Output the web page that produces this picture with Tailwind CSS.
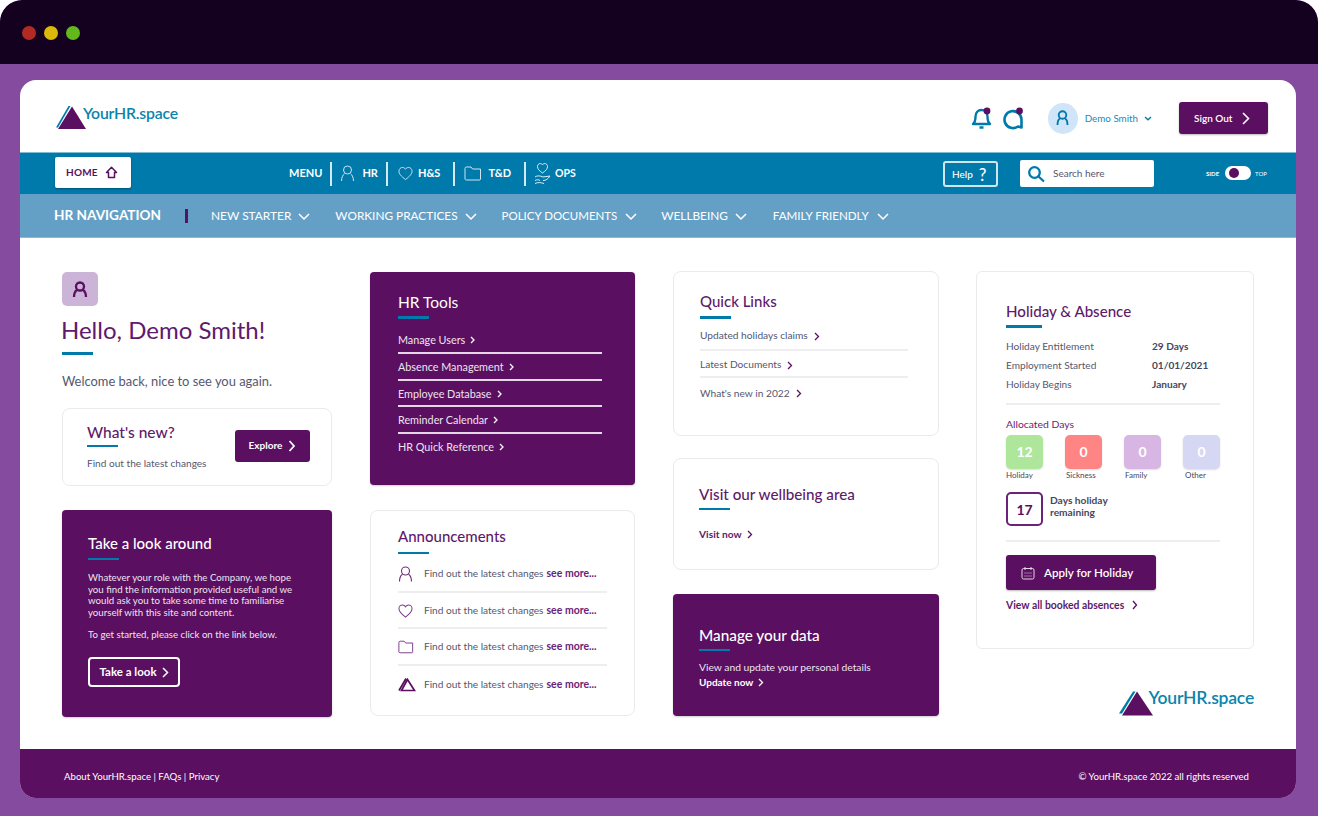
<!doctype html>
<html><head><meta charset="utf-8"><script src="https://cdn.jsdelivr.net/npm/@tailwindcss/browser@4"></script></head>
<body class="m-0 bg-white">
<div class="w-[1318px] h-[816px] overflow-hidden flex flex-col bg-[#854b9f] rounded-t-[22px] font-['Lato','Noto_Sans',sans-serif] text-[#555770]">
  <div class="h-[64px] shrink-0 bg-[#14011f] rounded-t-[22px] flex items-center gap-[8px] pl-[22px] pt-[2px]">
    <span class="w-[14px] h-[14px] rounded-full bg-[#b22a24]"></span><span class="w-[14px] h-[14px] rounded-full bg-[#dcb70c]"></span><span class="w-[14px] h-[14px] rounded-full bg-[#62b81c]"></span>
  </div>
  <div class="mt-[16px] ml-[20px] w-[1276px] h-[718px] bg-white rounded-[16px] overflow-hidden flex flex-col">
    <!-- header -->
    <header class="h-[72px] shrink-0 flex items-center pl-[36px] pr-[28px] pt-[4px]">
      <div class="flex items-start relative h-[26px] w-[124px] -mt-[3px]">
        <svg width="31" height="24" viewBox="0 0 31 24" class="mt-[2px] shrink-0"><path d="M0 21.500 L12.500 0 L14.500 0 L2 21.500Z" fill="#0079ab"/><path d="M2 23 L16 0.500 L30 23Z" fill="#5a0f60"/></svg>
        <span class="ml-[-4px] -mt-[1px] text-[15.800px] leading-[20px] font-semibold text-[#0a84ad] tracking-[-0.2px]">YourHR.space</span>
      </div>
      <div class="ml-auto flex items-center">
        <svg width="22" height="24" viewBox="0 0 22 24" fill="none" stroke="#0079ab" stroke-width="2.400"><path d="M2 18c2.500-2 2.500-4 2.500-7.500 0-4 2.500-6.500 6-6.500s6 2.500 6 6.500c0 3.500 0 5.500 2.500 7.500Z" stroke-linejoin="round"/><path d="M8.500 21.500h4" stroke-width="2.600"/><circle cx="16" cy="5" r="3.400" fill="#5a0f60" stroke="none"/></svg>
        <svg class="ml-[10px]" width="22" height="24" viewBox="0 0 22 24" fill="none" stroke="#0079ab" stroke-width="2.600"><path d="M15 20.500 A8.500 8.500 0 1 1 18.500 13.500 L18.500 21.500 Z" stroke-linejoin="round"/><circle cx="16.500" cy="5" r="3.400" fill="#5a0f60" stroke="none"/></svg>
        <span class="ml-[23px] w-[30px] h-[31px] rounded-full bg-[#d0e6f8] flex items-center justify-center">
          <svg width="13" height="16" viewBox="0 0 13 16" fill="none" stroke="#0079ab" stroke-width="1.900"><circle cx="6.500" cy="5" r="3.800"/><path d="M1.500 15c0-4 1.500-6 2.500-6.500M11.500 15c0-4-1.500-6-2.500-6.500"/></svg>
        </span>
        <span class="ml-[7px] text-[9.800px] text-[#1b8bb5]">Demo Smith</span>
        <svg class="ml-[6px]" width="8" height="5" viewBox="0 0 8 5" fill="none" stroke="#0079ab" stroke-width="1.300"><path d="M1 1l3 2.800L7 1"/></svg>
        <button class="ml-[27px] w-[89px] h-[32px] rounded-[3px] bg-[#5a0f60] shadow-[0_1px_2px_#0004] text-white text-[10px] font-semibold flex items-center pl-[15px]">Sign Out
          <svg class="ml-[10px]" width="8" height="13" viewBox="0 0 8 13" fill="none" stroke="#fff" stroke-width="1.600"><path d="M1 1l5.500 5.500L1 12"/></svg>
        </button>
      </div>
    </header>
    <!-- blue nav -->
    <nav class="h-[42px] shrink-0 bg-[#0079ab] border-t border-[#7fbcd5] flex items-center pl-[35px] text-white relative">
      <div class="w-[76px] h-[31px] bg-white rounded-[2px] shadow-[0_1px_2px_#0005] flex items-center pl-[11px] pt-[1px] text-[#5a0f60] text-[10px] font-bold tracking-[0.2px] mb-[3px]">HOME
        <svg class="ml-[7px]" width="13" height="13" viewBox="0 0 13 13" fill="none" stroke="#5a0f60" stroke-width="1.500"><path d="M6.500 1.200L1.500 6.500H3.500V11.500H9.500V6.500H11.500Z" stroke-linejoin="round"/></svg>
      </div>
      <div class="ml-[158px] flex items-center text-[11px] font-bold h-[24px]">
        <span>MENU</span><span class="ml-[8px] w-[2px] h-[24px] bg-[#d4e9f2]"></span>
        <svg class="ml-[8px]" width="15" height="17" viewBox="0 0 15 17" fill="none" stroke="#cfe6f0" stroke-width="1"><circle cx="7.500" cy="5" r="4"/><path d="M1.500 16c0-4 1.800-6.500 3-7.300M13.500 16c0-4-1.800-6.500-3-7.300"/></svg>
        <span class="ml-[7px]">HR</span><span class="ml-[8px] w-[2px] h-[24px] bg-[#d4e9f2]"></span>
        <svg class="ml-[10px]" width="15" height="15" viewBox="0 0 16 15" fill="none" stroke="#cfe6f0" stroke-width="1"><path d="M8 14C3.500 10.500 1 8 1 5 1 2.500 3 1 4.700 1 6 1 7.300 1.700 8 3 8.700 1.700 10 1 11.300 1 13 1 15 2.500 15 5 15 8 12.500 10.500 8 14Z"/></svg>
        <span class="ml-[5px]">H&amp;S</span><span class="ml-[13px] w-[2px] h-[24px] bg-[#d4e9f2]"></span>
        <svg class="ml-[9px]" width="18" height="15" viewBox="0 0 18 15" fill="none" stroke="#cfe6f0" stroke-width="1"><path d="M1 2.500C1 1.500 1.500 1 2.500 1H7l1.500 2h8v10c0 .700-.500 1-1 1h-13c-1 0-1.500-.500-1.500-1Z"/></svg>
        <span class="ml-[6px]">T&amp;D</span><span class="ml-[13px] w-[2px] h-[24px] bg-[#d4e9f2]"></span>
        <svg class="ml-[8px]" width="17" height="23" viewBox="0 0 17 23" fill="none" stroke="#dcedf5" stroke-width="1"><path d="M8.500 11C5 8.500 3.500 7 3.500 4.500 3.500 2.500 5 1.500 6.300 1.500c1 0 1.800.500 2.200 1.300.4-.8 1.200-1.300 2.200-1.300 1.300 0 2.800 1 2.800 3 0 2.500-1.500 4-5 6.500Z"/><path d="M1 15c2-1.500 5-1.500 8 0l7-1c-2 3-4 4.500-7 4.500M1 18.500c2-1 3.500-1 5 0M1 21.500c3-1.500 6-1 9 0"/></svg>
        <span class="ml-[4px] text-[10.500px]">OPS</span>
      </div>
      <div class="absolute left-[923px] top-[8px] w-[55px] h-[26px] border-2 border-[#cfe6f0] rounded-[3px] flex items-center pl-[7px] text-[10px] font-medium">Help <span class="ml-[6px] text-[17px] leading-none font-medium">?</span></div>
      <div class="absolute left-[1000px] top-[7px] w-[134px] h-[27px] bg-white rounded-[2px] flex items-center pl-[7px] text-[10px] text-[#555770]">
        <svg width="18" height="18" viewBox="0 0 18 18" fill="none" stroke="#0079ab" stroke-width="2.300"><circle cx="7.500" cy="7.500" r="5.300"/><path d="M11.500 11.500l5.500 5"/></svg>
        <span class="ml-[8px]">Search here</span>
      </div>
      <div class="absolute left-[1186px] top-[13px] flex items-center text-[6px] text-white h-[14px]">
        <b>SIDE</b><span class="ml-[6px] w-[26px] h-[14px] bg-white rounded-full flex items-center pl-[4px]"><span class="w-[10px] h-[10px] rounded-full bg-[#5a0f60]"></span></span><span class="ml-[4px]">TOP</span>
      </div>
    </nav>
    <!-- light nav -->
    <div class="h-[44px] shrink-0 bg-[#64a0c6] flex items-center pl-[34px] text-white border-b border-[#82bcd9]">
      <b class="text-[13.600px] font-bold">HR NAVIGATION</b>
      <span class="ml-[24px] w-[3px] h-[14px] bg-[#5a0f60]"></span>
      <span class="ml-[23px] text-[11.900px]">NEW STARTER</span><svg class="ml-[7px] mt-[2px]" width="12" height="8" viewBox="0 0 12 8" fill="none" stroke="#fff" stroke-width="1.500"><path d="M1 1l5 5 5-5"/></svg>
      <span class="ml-[25px] text-[11.800px]">WORKING PRACTICES</span><svg class="ml-[7px] mt-[2px]" width="12" height="8" viewBox="0 0 12 8" fill="none" stroke="#fff" stroke-width="1.500"><path d="M1 1l5 5 5-5"/></svg>
      <span class="ml-[25px] text-[11.500px]">POLICY DOCUMENTS</span><svg class="ml-[8px] mt-[2px]" width="12" height="8" viewBox="0 0 12 8" fill="none" stroke="#fff" stroke-width="1.500"><path d="M1 1l5 5 5-5"/></svg>
      <span class="ml-[24px] text-[11.800px]">WELLBEING</span><svg class="ml-[7px] mt-[2px]" width="12" height="8" viewBox="0 0 12 8" fill="none" stroke="#fff" stroke-width="1.500"><path d="M1 1l5 5 5-5"/></svg>
      <span class="ml-[26px] text-[11.600px]">FAMILY FRIENDLY</span><svg class="ml-[8px] mt-[2px]" width="12" height="8" viewBox="0 0 12 8" fill="none" stroke="#fff" stroke-width="1.500"><path d="M1 1l5 5 5-5"/></svg>
    </div>
    <!-- main -->
    <main class="flex-1 flex pl-[42px] pt-[33px]">
      <!-- col1 -->
      <div class="w-[270px] flex flex-col">
        <div class="w-[36px] h-[34px] rounded-[5px] bg-[#cbb4d8] flex items-center justify-center mt-[1px]">
          <svg width="16" height="17" viewBox="0 0 16 17" fill="none" stroke="#5a0f60" stroke-width="2.300"><circle cx="8" cy="5.500" r="4"/><path d="M2 16c0-4 1.500-6 3-7M14 16c0-4-1.500-6-3-7"/></svg>
        </div>
        <h1 class="mt-[9px] -ml-[1px] text-[24px] leading-[30px] text-[#5e1a6b]">Hello, Demo Smith!</h1>
        <span class="mt-[7px] w-[31px] h-[3px] bg-[#0079ab]"></span>
        <p class="mt-[17px] text-[12.900px] leading-[18px]">Welcome back, nice to see you again.</p>
        <div class="mt-[18px] h-[78px] border border-[#ebebef] rounded-[8px] flex items-center pl-[24px] pr-[21px] pb-[3px]">
          <div>
            <h3 class="text-[15.500px] leading-[20px] font-medium text-[#5e1a6b]">What's new?</h3>
            <span class="block mt-[3px] w-[31px] h-[2px] bg-[#0079ab]"></span>
            <p class="mt-[10px] text-[10.100px] leading-[12px]">Find out the latest changes</p>
          </div>
          <button class="ml-auto w-[75px] h-[32px] rounded-[3px] bg-[#5a0f60] text-white text-[10px] font-bold flex items-center justify-center">Explore<svg class="ml-[6px]" width="8" height="12" viewBox="0 0 8 12" fill="none" stroke="#fff" stroke-width="1.800"><path d="M1.500 1l4.500 5-4.500 5"/></svg></button>
        </div>
        <div class="mt-[24px] h-[207px] rounded-[4px] bg-[#5a0f60] text-white pl-[26px] pr-[30px] pt-[23px] flex flex-col shadow-[0_1px_2px_#0003]">
          <h3 class="text-[15px] leading-[20px] font-medium">Take a look around</h3>
          <span class="mt-[5px] w-[31px] h-[2px] bg-[#0079ab]"></span>
          <p class="mt-[12px] text-[9.700px] leading-[11.500px] text-[#eee3f0]">Whatever your role with the Company, we hope you find the information provided useful and we would ask you to take some time to familiarise yourself with this site and content.</p>
          <p class="mt-[10px] text-[9.700px] leading-[12px] text-[#eee3f0]">To get started, please click on the link below.</p>
          <button class="mt-[17px] w-[92px] h-[30px] border-2 border-white rounded-[4px] text-[11.500px] font-bold flex items-center justify-center">Take a look<svg class="ml-[5px]" width="7" height="11" viewBox="0 0 7 11" fill="none" stroke="#fff" stroke-width="1.500"><path d="M1 1l4.500 4.500L1 10"/></svg></button>
        </div>
      </div>
      <!-- col2 -->
      <div class="ml-[38px] w-[265px] flex flex-col">
        <div class="mt-[1px] h-[213px] rounded-[4px] bg-[#5a0f60] text-white pl-[28px] pr-[33px] pt-[20px] shadow-[0_1px_2px_#0003]">
          <h3 class="text-[15.500px] leading-[20px]">HR Tools</h3>
          <span class="block mt-[4px] w-[31px] h-[3px] bg-[#0079ab]"></span>
          <div class="mt-[8px] text-[10.800px] text-[#eee3f0]">
            <div class="h-[27px] pt-[5px] border-b-2 border-[#e5d7e8] flex items-start">Manage Users<svg class="ml-[5px] mt-[4px]" width="5" height="8" viewBox="0 0 5 8" fill="none" stroke="#fff" stroke-width="1.300"><path d="M1 1l3 3-3 3"/></svg></div>
            <div class="h-[27px] pt-[5px] border-b-2 border-[#e5d7e8] flex items-start">Absence Management<svg class="ml-[5px] mt-[4px]" width="5" height="8" viewBox="0 0 5 8" fill="none" stroke="#fff" stroke-width="1.300"><path d="M1 1l3 3-3 3"/></svg></div>
            <div class="h-[26px] pt-[5px] border-b-2 border-[#e5d7e8] flex items-start">Employee Database<svg class="ml-[5px] mt-[4px]" width="5" height="8" viewBox="0 0 5 8" fill="none" stroke="#fff" stroke-width="1.300"><path d="M1 1l3 3-3 3"/></svg></div>
            <div class="h-[27px] pt-[5px] border-b-2 border-[#e5d7e8] flex items-start">Reminder Calendar<svg class="ml-[5px] mt-[4px]" width="5" height="8" viewBox="0 0 5 8" fill="none" stroke="#fff" stroke-width="1.300"><path d="M1 1l3 3-3 3"/></svg></div>
            <div class="h-[27px] pt-[5px] flex items-start">HR Quick Reference<svg class="ml-[5px] mt-[4px]" width="5" height="8" viewBox="0 0 5 8" fill="none" stroke="#fff" stroke-width="1.300"><path d="M1 1l3 3-3 3"/></svg></div>
          </div>
        </div>
        <div class="mt-[25px] h-[206px] border border-[#ebebef] rounded-[8px] pl-[27px] pr-[27px] pt-[15px]">
          <h3 class="text-[15px] leading-[20px] font-medium text-[#5e1a6b]">Announcements</h3>
          <span class="block mt-[6px] w-[31px] h-[2px] bg-[#0079ab]"></span>
          <div class="mt-[3px] text-[10.100px]">
            <div class="h-[36px] border-b-2 border-[#eeeef0] flex items-center"><span class="w-[26px]"><svg width="15" height="16" viewBox="0 0 15 16" fill="none" stroke="#6d2c7c" stroke-width="1.100"><circle cx="7.500" cy="5" r="4"/><path d="M1.500 15.500c0-4 1.800-6.500 3-7.300M13.500 15.500c0-4-1.800-6.500-3-7.300"/></svg></span><span>Find out the latest changes</span><b class="ml-[3px] text-[10.500px] text-[#6a2378]">see more...</b></div>
            <div class="h-[36px] border-b-2 border-[#eeeef0] flex items-center pt-[1px]"><span class="w-[26px]"><svg width="15" height="14" viewBox="0 0 16 15" fill="none" stroke="#7d3d8c" stroke-width="1.100"><path d="M8 14C3.500 10.500 1 8 1 5 1 2.500 3 1 4.700 1 6 1 7.300 1.700 8 3 8.700 1.700 10 1 11.300 1 13 1 15 2.500 15 5 15 8 12.500 10.500 8 14Z"/></svg></span><span>Find out the latest changes</span><b class="ml-[3px] text-[10.500px] text-[#6a2378]">see more...</b></div>
            <div class="h-[37px] border-b-2 border-[#eeeef0] flex items-center"><span class="w-[26px]"><svg width="16" height="14" viewBox="0 0 18 15" fill="none" stroke="#7d3d8c" stroke-width="1.100"><path d="M1 2.500C1 1.500 1.500 1 2.500 1H7l1.500 2h8v10c0 .700-.500 1-1 1h-13c-1 0-1.500-.500-1.500-1Z"/></svg></span><span>Find out the latest changes</span><b class="ml-[3px] text-[10.500px] text-[#6a2378]">see more...</b></div>
            <div class="h-[37px] flex items-center"><span class="w-[26px]"><svg width="18" height="15" viewBox="0 0 18 15" fill="none" stroke="#5a0f60" stroke-width="1.700"><path d="M1 13.500L8 1.500M9.500 2.500L16.500 13.500H3.500Z"/></svg></span><span>Find out the latest changes</span><b class="ml-[3px] text-[10.500px] text-[#6a2378]">see more...</b></div>
          </div>
        </div>
      </div>
      <!-- col3 -->
      <div class="ml-[38px] w-[266px] flex flex-col">
        <div class="h-[165px] border border-[#ebebef] rounded-[8px] pl-[26px] pr-[30px] pt-[19px]">
          <h3 class="text-[15px] leading-[20px] font-medium text-[#5e1a6b]">Quick Links</h3>
          <span class="block mt-[5px] w-[31px] h-[2.500px] bg-[#0079ab]"></span>
          <div class="mt-[5px] text-[10.200px]">
            <div class="h-[27px] border-b-2 border-[#eeeef0] flex items-center">Updated holidays claims<svg class="ml-[6px]" width="6" height="9" viewBox="0 0 6 9" fill="none" stroke="#5a0f60" stroke-width="1.300"><path d="M1 1l3.500 3.500L1 8"/></svg></div>
            <div class="h-[27px] border-b-2 border-[#eeeef0] flex items-center pt-[4px]">Latest Documents<svg class="ml-[6px]" width="6" height="9" viewBox="0 0 6 9" fill="none" stroke="#5a0f60" stroke-width="1.300"><path d="M1 1l3.500 3.500L1 8"/></svg></div>
            <div class="h-[32px] flex items-center">What's new in 2022<svg class="ml-[6px]" width="6" height="9" viewBox="0 0 6 9" fill="none" stroke="#5a0f60" stroke-width="1.300"><path d="M1 1l3.500 3.500L1 8"/></svg></div>
          </div>
        </div>
        <div class="mt-[22px] h-[112px] border border-[#ebebef] rounded-[8px] pl-[25px] pt-[25px]">
          <h3 class="text-[15.200px] leading-[20px] font-medium text-[#5e1a6b]">Visit our wellbeing area</h3>
          <span class="block mt-[4px] w-[31px] h-[2px] bg-[#0079ab]"></span>
          <p class="mt-[17px] text-[10.200px] leading-[14px] font-bold text-[#5e1a6b] flex items-center">Visit now<svg class="ml-[5px]" width="6" height="9" viewBox="0 0 6 9" fill="none" stroke="#5a0f60" stroke-width="1.300"><path d="M1 1l3.500 3.500L1 8"/></svg></p>
        </div>
        <div class="mt-[24px] h-[122px] rounded-[4px] bg-[#5a0f60] text-white pl-[26px] pt-[31px] shadow-[0_1px_2px_#0003]">
          <h3 class="text-[15.300px] leading-[20px] font-medium">Manage your data</h3>
          <span class="block mt-[4px] w-[31px] h-[2px] bg-[#0079ab]"></span>
          <p class="mt-[10px] text-[10.300px] leading-[13px] text-[#eee3f0]">View and update your personal details</p>
          <p class="mt-[1px] text-[10px] leading-[14px] font-bold flex items-center">Update now<svg class="ml-[5px]" width="6" height="9" viewBox="0 0 6 9" fill="none" stroke="#fff" stroke-width="1.300"><path d="M1 1l3.500 3.500L1 8"/></svg></p>
        </div>
      </div>
      <!-- col4 -->
      <div class="ml-[37px] w-[278px] flex flex-col">
        <div class="h-[378px] border border-[#ebebef] rounded-[6px] pl-[29px] pr-[33px] pt-[29px]">
          <h3 class="text-[15.100px] leading-[20px] font-medium text-[#5e1a6b]">Holiday &amp; Absence</h3>
          <span class="block mt-[4px] w-[36px] h-[3px] bg-[#0079ab]"></span>
          <div class="mt-[9px] text-[10.100px] leading-[19px] pb-[9px] border-b-2 border-[#eeeef0]">
            <div class="flex"><span class="w-[146px]">Holiday Entitlement</span><b class="text-[#45475e]">29 Days</b></div>
            <div class="flex"><span class="w-[146px]">Employment Started</span><b class="text-[#45475e]">01/01/2021</b></div>
            <div class="flex"><span class="w-[146px]">Holiday Begins</span><b class="text-[#45475e]">January</b></div>
          </div>
          <p class="mt-[12px] text-[10.400px] leading-[14px] text-[#6a2378]">Allocated Days</p>
          <div class="mt-[4px] flex justify-between text-[8px] leading-[10px] text-[#45475e]">
            <div class="w-[37px]"><div class="h-[34px] rounded-[5px] bg-[#aee69c] text-white text-[14px] font-bold flex items-center justify-center shadow-[0_1px_2px_#0002]">12</div><div class="mt-[1px]">Holiday</div></div>
            <div class="w-[37px]"><div class="h-[34px] rounded-[5px] bg-[#ff8484] text-white text-[14px] font-bold flex items-center justify-center shadow-[0_1px_2px_#0002]">0</div><div class="mt-[1px] pl-[1px]">Sickness</div></div>
            <div class="w-[37px]"><div class="h-[34px] rounded-[5px] bg-[#d8b6e4] text-white text-[14px] font-bold flex items-center justify-center shadow-[0_1px_2px_#0002]">0</div><div class="mt-[1px] pl-[1px]">Family</div></div>
            <div class="w-[37px]"><div class="h-[34px] rounded-[5px] bg-[#d6d8f3] text-white text-[14px] font-bold flex items-center justify-center shadow-[0_1px_2px_#0002]">0</div><div class="mt-[1px] pl-[2px]">Other</div></div>
          </div>
          <div class="mt-[12px] flex items-start pb-[14px] border-b-2 border-[#eeeef0]">
            <div class="w-[37px] h-[34px] border-2 border-[#6a2378] rounded-[5px] text-[#5a0f60] text-[14px] font-bold flex items-center justify-center">17</div>
            <p class="ml-[7px] mt-[2px] text-[10.200px] leading-[12px] font-bold text-[#45475e]">Days holiday<br>remaining</p>
          </div>
          <button class="mt-[13px] w-[150px] h-[35px] rounded-[3px] bg-[#5a0f60] text-white text-[11.600px] font-semibold flex items-center pl-[15px] shadow-[0_1px_2px_#0004]">
            <svg width="14" height="14" viewBox="0 0 14 14" fill="none" stroke="#e5d7e8" stroke-width="1"><rect x="1" y="2.500" width="12" height="10.500" rx="1.500"/><path d="M4 1v3M10 1v3M3.500 7h7M3.500 10h7" stroke-dasharray="1 1"/></svg>
            <span class="ml-[9px]">Apply for Holiday</span>
          </button>
          <p class="mt-[8px] text-[10.400px] leading-[14px] font-bold text-[#5e1a6b] flex items-center">View all booked absences<svg class="ml-[8px]" width="6" height="10" viewBox="0 0 6 10" fill="none" stroke="#5a0f60" stroke-width="1.300"><path d="M1 1l3.500 4L1 9"/></svg></p>
        </div>
        <div class="mt-[41px] self-end flex items-start h-[27px]">
          <svg width="35" height="26" viewBox="0 0 35 26" class="shrink-0"><path d="M0 23.500 L14 1.500 L16.500 1.500 L3 23.500Z" fill="#0079ab"/><path d="M3 25.500 L18 1.500 L34 25.500Z" fill="#5a0f60"/></svg>
          <span class="ml-[-5px] -mt-[2px] text-[17.500px] leading-[20px] font-semibold text-[#0a84ad] tracking-[-0.2px]">YourHR.space</span>
        </div>
      </div>
    </main>
    <footer class="h-[49px] shrink-0 bg-[#5a0f60] text-white text-[9.650px] flex items-center justify-between pl-[44px] pr-[47px] pt-[6px]">
      <span>About YourHR.space | FAQs | Privacy</span><span>© YourHR.space 2022 all rights reserved</span>
    </footer>
  </div>
</div>
</body></html>
